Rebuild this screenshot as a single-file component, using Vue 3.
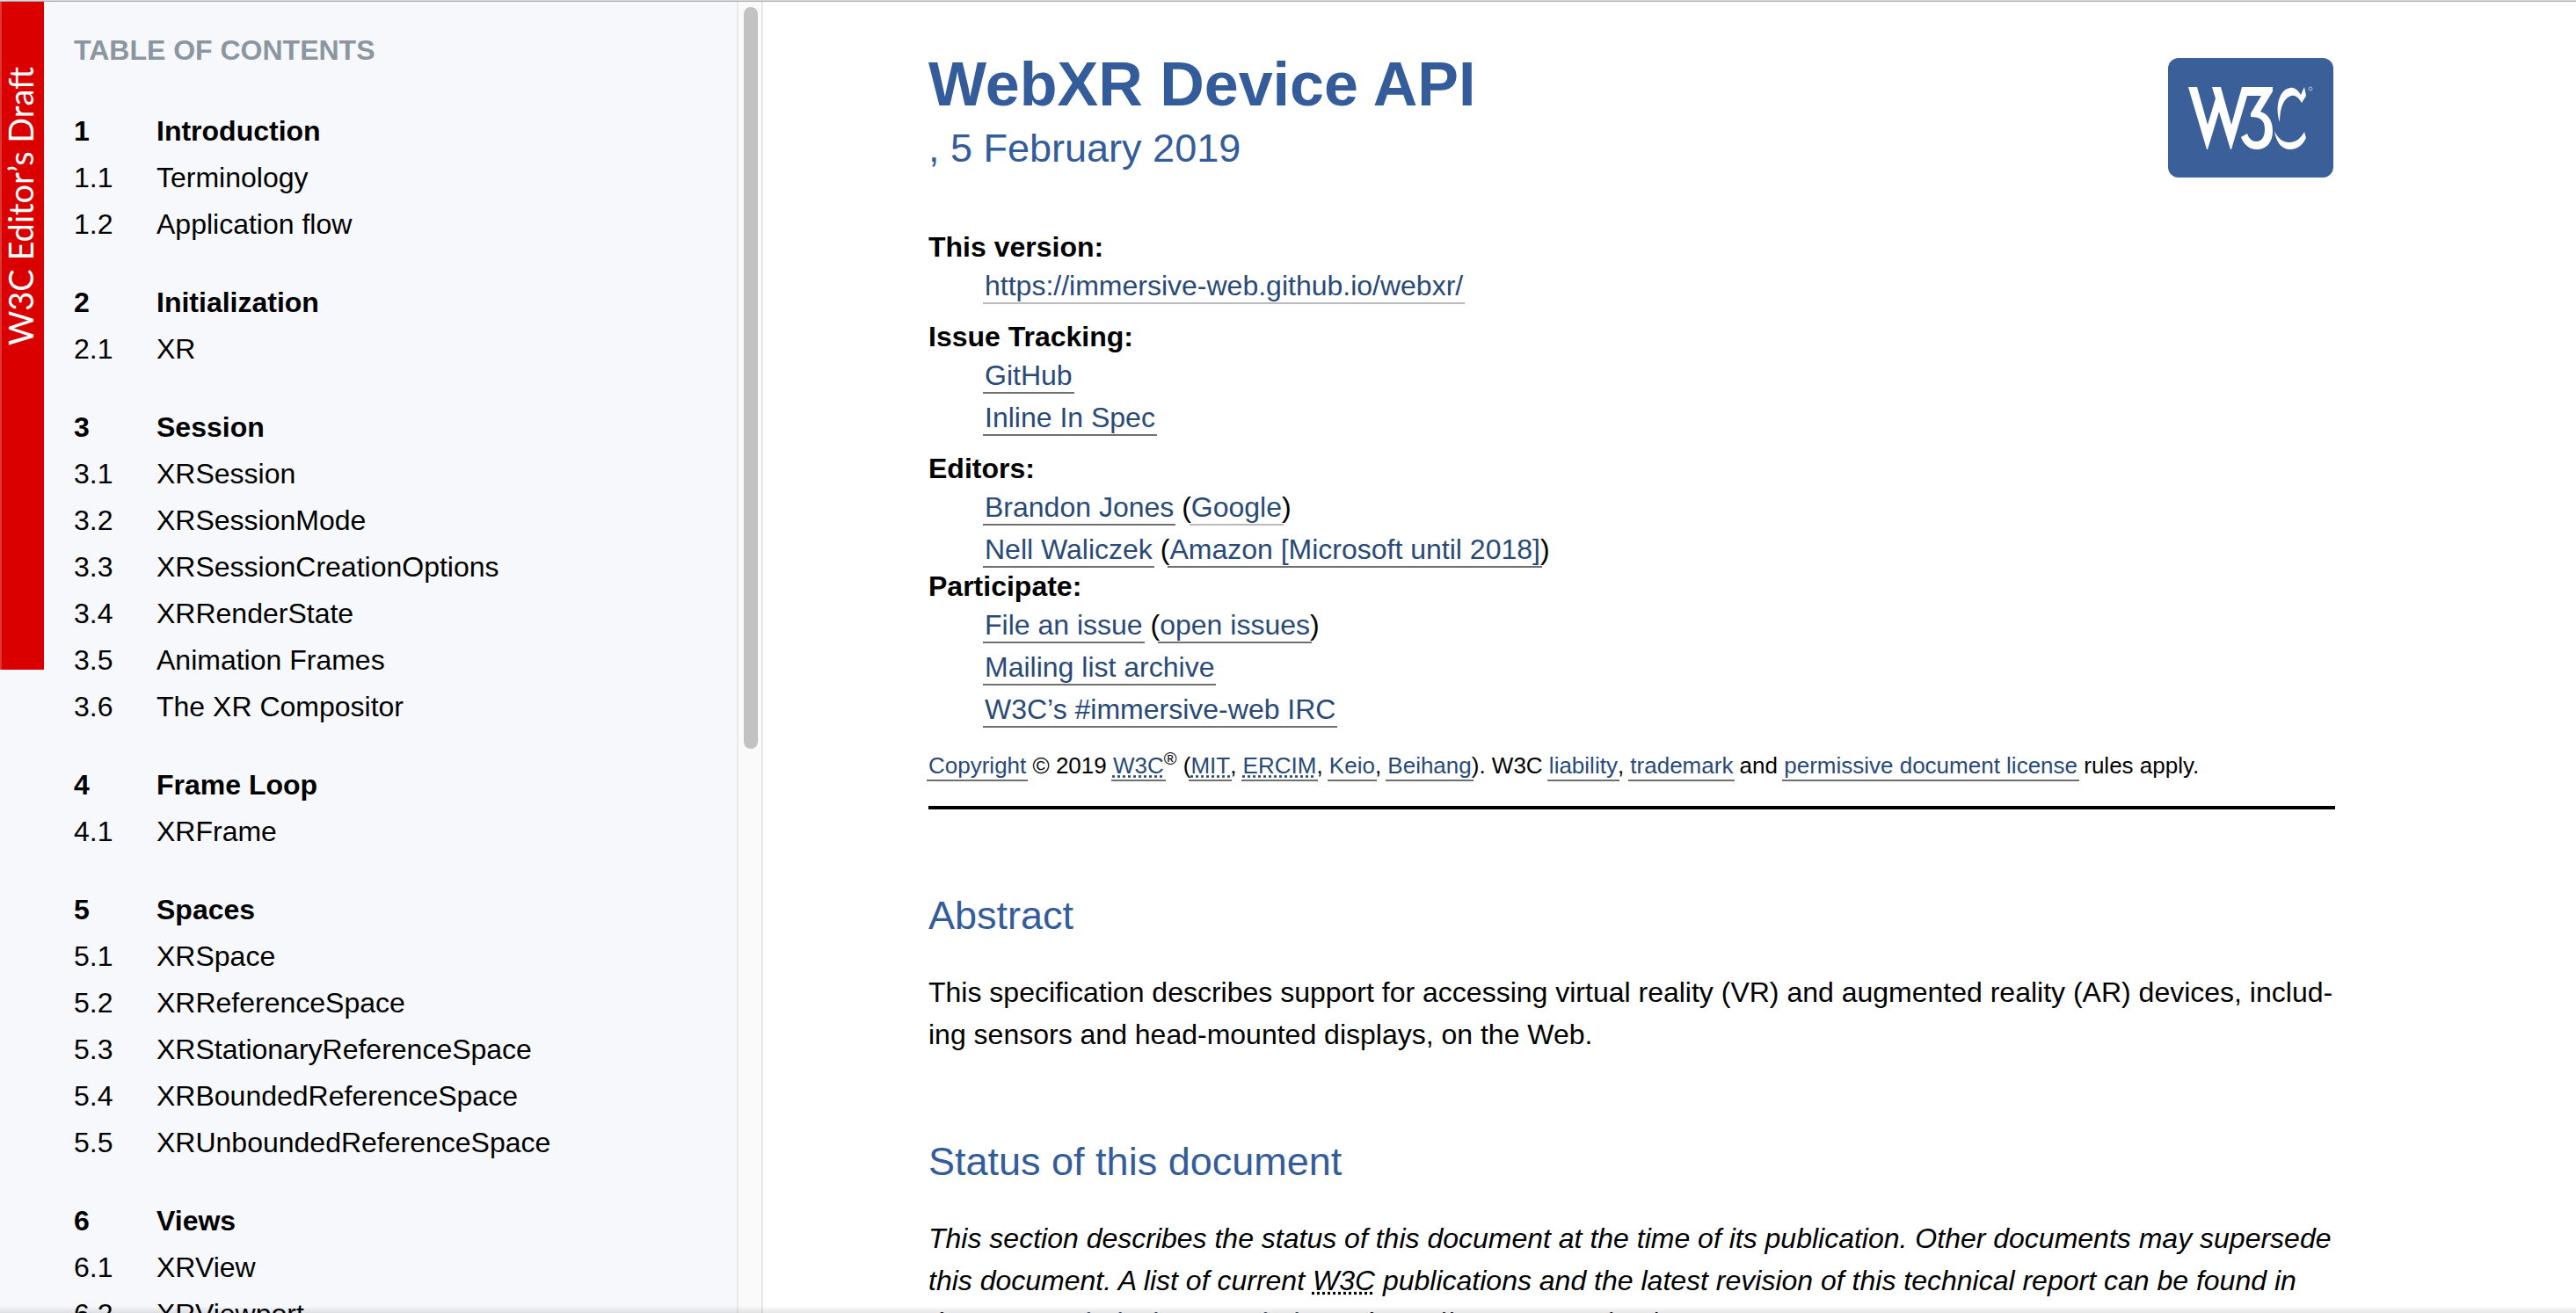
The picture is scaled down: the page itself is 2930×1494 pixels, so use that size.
<script setup>
const sections = [
  { title: 'Introduction', items: ['Terminology', 'Application flow'] },
  { title: 'Initialization', items: ['XR'] },
  {
    title: 'Session',
    items: [
      'XRSession',
      'XRSessionMode',
      'XRSessionCreationOptions',
      'XRRenderState',
      'Animation Frames',
      'The XR Compositor',
    ],
  },
  { title: 'Frame Loop', items: ['XRFrame'] },
  {
    title: 'Spaces',
    items: [
      'XRSpace',
      'XRReferenceSpace',
      'XRStationaryReferenceSpace',
      'XRBoundedReferenceSpace',
      'XRUnboundedReferenceSpace',
    ],
  },
  { title: 'Views', items: ['XRView', 'XRViewport'] },
]
</script>

<template>
  <div class="page">
    <div class="banner"><span>W3C Editor’s Draft</span></div>

    <nav class="toc" aria-labelledby="toc-title">
      <h2 id="toc-title">Table of Contents</h2>
      <ol>
        <li v-for="(section, s) in sections" :key="section.title" class="section">
          <a href="#" class="row top"><span class="num">{{ s + 1 }}</span>{{ section.title }}</a>
          <ol>
            <li v-for="(item, i) in section.items" :key="item">
              <a href="#" class="row"><span class="num">{{ s + 1 }}.{{ i + 1 }}</span>{{ item }}</a>
            </li>
          </ol>
        </li>
      </ol>
    </nav>

    <div class="track"><div class="thumb"></div></div>

    <main>
      <article>
        <header>
          <div class="titles">
            <h1>WebXR Device API</h1>
            <p class="date">, 5 February 2019</p>
          </div>
          <a href="#" class="logo" aria-label="W3C">
            <svg viewBox="0 0 188 136">
              <rect width="188" height="136" rx="12" fill="#3a5f99" />
              <g fill="#fff">
                <path d="M23 33h10l12 43 9-30-4-13h10l12 43 12-43h35v5l-14 23c10 3 14 12 14 22 0 13-7 21-18 21-9 0-15-6-18-14l7-4c2 6 6 9 10 9 7 0 10-6 10-14 0-10-5-14-16-14v-4l12-20H90L72 104h-1L58 61 45 104h-1z" />
                <path d="M155 33l2 10-5 8c-4-7-8-9-12-8-8 2-13 13-13 30-6-18 0-38 12-39 5-1 9 3 12 8zM121 83c4 9 10 13 17 13 8 0 13-5 17-12l2 7c-4 8-10 13-18 13-10 0-16-8-18-21z" />
              </g>
              <circle cx="162" cy="35" r="2" fill="none" stroke="#b9c6db" />
            </svg>
          </a>
        </header>

        <dl>
          <dt>This version:</dt>
          <dd class="last"><a href="#" class="visited">https://immersive-web.github.io/webxr/</a></dd>
          <dt>Issue Tracking:</dt>
          <dd><a href="#">GitHub</a></dd>
          <dd class="last"><a href="#">Inline In Spec</a></dd>
          <dt>Editors:</dt>
          <dd><a href="#">Brandon Jones</a> (<a href="#" class="visited">Google</a>)</dd>
          <dd><a href="#">Nell Waliczek</a> (<a href="#">Amazon [Microsoft until 2018]</a>)</dd>
          <dt>Participate:</dt>
          <dd><a href="#">File an issue</a> (<a href="#">open issues</a>)</dd>
          <dd><a href="#">Mailing list archive</a></dd>
          <dd><a href="#">W3C’s #immersive-web IRC</a></dd>
        </dl>

        <p class="copyright">
          <a href="#">Copyright</a> © 2019 <a href="#"><abbr>W3C</abbr></a><sup>®</sup> (<a href="#"><abbr>MIT</abbr></a>, <a href="#"><abbr>ERCIM</abbr></a>, <a href="#">Keio</a>, <a href="#">Beihang</a>). W3C <a href="#">liability</a>, <a href="#">trademark</a> and <a href="#">permissive document license</a> rules apply.
        </p>
        <hr />

        <h2>Abstract</h2>
        <p>
          This specification describes support for accessing virtual reality (VR) and augmented reality (AR) devices, includ&shy;ing sensors and head-mounted displays, on the Web.
        </p>

        <h2>Status of this document</h2>
        <p class="status">
          This section describes the status of this document at the time of its publication. Other documents may supersede this document. A list of current <abbr>W3C</abbr> publications and the latest revision of this technical report can be found in the <a href="#">W3C technical reports index</a> at https://www.w3.org/TR/.
        </p>
      </article>
    </main>

    <div class="window-edge"></div>
  </div>
</template>

<style>
html,
body {
  margin: 0;
  overflow: hidden;
}
</style>

<style scoped>
.page {
  position: relative;
  box-sizing: border-box;
  display: flex;
  height: 100vh;
  overflow: hidden;
  padding-top: 2px;
  background: linear-gradient(#d8d8d8 1px, #adadad 1px, #adadad 2px, #fff 2px);
  color: #000;
  font: 32px/48px "Liberation Sans", Arial, sans-serif;
}

ol {
  margin: 0;
  padding: 0;
  list-style: none;
}

.banner {
  position: absolute;
  top: 2px;
  left: 0;
  box-sizing: border-box;
  width: 50px;
  height: 760px;
  padding-top: 74px;
  border-left: 2px solid #df3535;
  background: #da0000;
  color: #fff;
}

.banner span {
  display: block;
  writing-mode: vertical-rl;
  transform: rotate(180deg);
  font: 38px/42px Lato, sans-serif;
  white-space: nowrap;
}

.toc {
  box-sizing: border-box;
  flex: none;
  width: 838px;
  padding: 29px 24px 0 84px;
  background: #f7f8fb;
}

.toc h2 {
  margin: 0 0 39px;
  color: #8b96a1;
  font-size: 32px;
  font-weight: bold;
  line-height: 53px;
  text-transform: uppercase;
}

.section {
  margin-bottom: 36px;
}

.row {
  display: flex;
  color: #000;
  line-height: 53px;
  text-decoration: none;
}

.top {
  font-weight: bold;
}

.num {
  width: 94px;
}

.track {
  box-sizing: border-box;
  flex: none;
  width: 30px;
  padding: 6px;
  border: solid #e8e8e8;
  border-width: 0 2px;
  background: #fafafa;
}

.thumb {
  width: 16px;
  height: 844px;
  border-radius: 8px;
  background: #c2c2c2;
}

main {
  flex: 1;
  padding: 64px 86px 0 0;
  background: #fff;
}

article {
  max-width: 1600px;
  margin: 0 auto;
}

header {
  display: flex;
  justify-content: space-between;
  padding-right: 2px;
}

h1,
.date,
article h2 {
  margin: 0;
  color: #345c9b;
}

h1 {
  font-size: 70px;
  font-weight: bold;
  line-height: 60px;
}

.date {
  padding-top: 16px;
  font-size: 45px;
  line-height: 54px;
}

.logo svg {
  display: block;
  width: 188px;
  height: 136px;
}

dl {
  margin: 61px 0 0;
}

dt {
  margin-bottom: 2px;
  font-weight: bold;
  line-height: 36px;
}

dd {
  margin: 0 0 0 64px;
}

.last {
  margin-bottom: 16px;
}

article p a,
dd a {
  margin: 0 -2px;
  padding: 0 2px 1px;
  border-bottom: 2px solid #707070;
  color: #294a78;
  text-decoration: none;
}

dd .visited {
  border-color: #bbb;
}

abbr {
  text-decoration: underline dotted;
}

.copyright {
  margin: 16px 0 0;
  font-size: 26px;
}

sup {
  font-size: 20px;
  line-height: 1;
}

hr {
  height: 4px;
  margin: 22px 0 0;
  border: 0;
  background: #000;
}

article h2 {
  margin-top: 94px;
  font-size: 45px;
  font-weight: normal;
  line-height: 54px;
}

article h2 + p {
  margin: 36px 0 0;
}

.status {
  font-style: italic;
}

.window-edge {
  position: absolute;
  right: 0;
  bottom: 0;
  left: 0;
  height: 8px;
  background: linear-gradient(rgba(0, 0, 0, 0), rgba(0, 0, 0, 0.1));
}
</style>
